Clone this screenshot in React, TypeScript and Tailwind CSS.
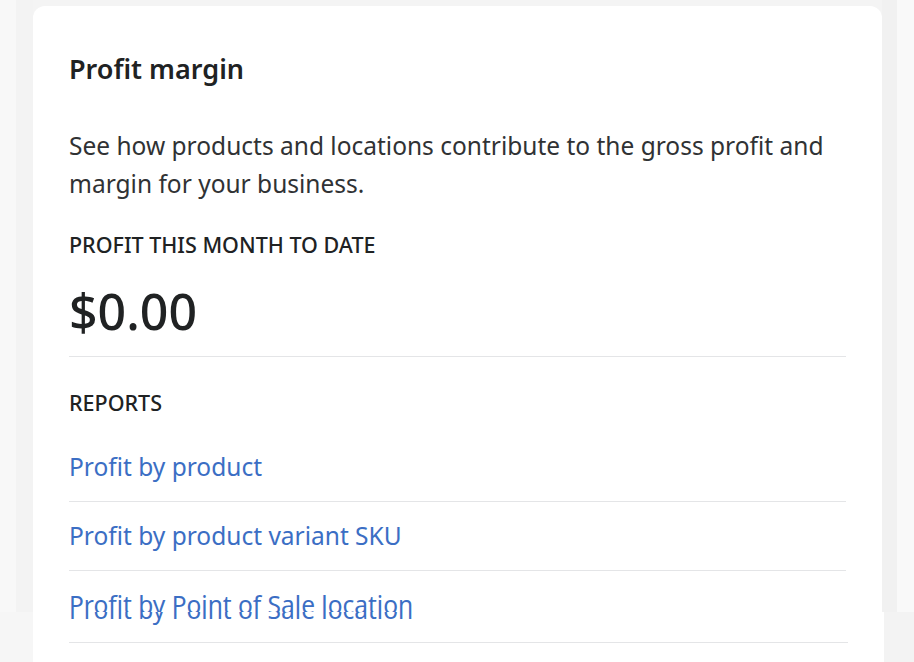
import React from 'react';

const reports = ['Profit by product', 'Profit by product variant SKU', 'Profit by Point of Sale location'];

export default function App() {
  return (
    <div
      className="relative h-[662px] w-[914px] overflow-hidden bg-[#f4f4f4] text-[#202223]"
      style={{ fontFamily: '"Noto Sans", "Open Sans", sans-serif' }}
    >
      <div className="flex h-full">
        <div className="w-[16px] bg-[#f8f8f8]" />
        <div className="w-[17px] bg-[#f3f3f3]" />
        <div className="flex w-[849px] flex-col pt-[6px]">
          <div className="flex-1 rounded-t-[12px] bg-white px-[36px] pt-[44px]">
            <h2 className="text-[27px] font-semibold leading-[38px]">Profit margin</h2>

            <p className="mt-[39px] text-[24.5px] leading-[38px] text-[#303234]">
              See how products and locations contribute to the gross profit and margin for your business.
            </p>

            <div className="mt-[28px] text-[21.5px] font-medium uppercase leading-[28px] text-[#202223]">
              Profit this month to date
            </div>
            <div className="mt-[22px] text-[50px] font-medium leading-[60px]">$0.00</div>

            <div className="mt-[15px] border-t border-[#e4e5e7]" />

            <div className="mt-[32px] text-[21.5px] font-medium uppercase leading-[28px]">Reports</div>

            <ul className="mt-[16px]">
              {reports.map((r) => (
                <li key={r} className="border-b border-[#e4e5e7]">
                  <a className="block py-[15px] text-[24.5px] leading-[38px] text-[#3b6ec4]">{r}</a>
                </li>
              ))}
            </ul>
          </div>
        </div>
        <div className="w-[15px] bg-[#f1f1f1]" />
        <div className="flex-1 bg-[#f9f9f9]" />
      </div>

      {/* stitched band at the bottom of the capture */}
      <div className="absolute inset-x-0 top-[612px] bottom-0 flex bg-[#f7f7f7]">
        <div className="w-[33px] bg-[#f6f6f6]" />
        <div className="relative w-[851px] overflow-hidden bg-white px-[36px]">
          <div className="-mt-[21px] border-b border-[#e4e5e7] pb-[13px] text-[24.5px] leading-[38px] text-[#3b6ec4]">
            Profit by Point of Sale location
          </div>
        </div>
        <div className="flex-1 bg-[#f3f3f3]" />
      </div>
    </div>
  );
}
